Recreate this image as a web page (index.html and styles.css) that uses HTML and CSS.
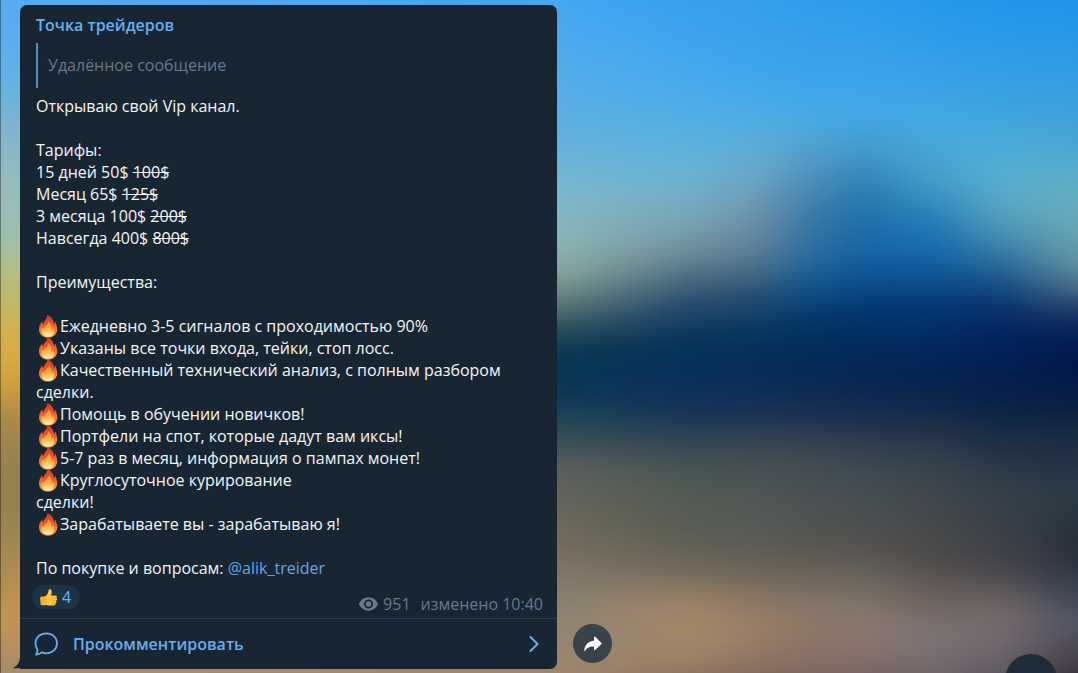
FILE: index.html
```html
<!DOCTYPE html>
<html lang="ru">
<head>
<meta charset="utf-8">
<meta name="viewport" content="width=device-width, initial-scale=1">
<title>Точка трейдеров</title>
<link rel="stylesheet" href="styles.css">
</head>
<body>
<svg class="sprite" aria-hidden="true">
  <defs>
    <linearGradient id="flame-outer" x1="0" y1="0" x2="0" y2="1">
      <stop offset="0" stop-color="#c43a20"/>
      <stop offset=".4" stop-color="#e8532c"/>
      <stop offset=".75" stop-color="#ff8636"/>
      <stop offset="1" stop-color="#ffa848"/>
    </linearGradient>
    <linearGradient id="flame-inner" x1="0" y1="0" x2="0" y2="1">
      <stop offset="0" stop-color="#ff8a36"/>
      <stop offset=".55" stop-color="#ffb84c"/>
      <stop offset="1" stop-color="#fff2b8"/>
    </linearGradient>
    <symbol id="flame" viewBox="0 0 24 24">
      <path fill="url(#flame-outer)" d="M11.200 1C11.600 4.500 8.200 6.500 7.400 10 6.600 9.300 6.200 8.500 6.300 7.300 4.200 9.500 3 12.200 3 15.200c0 5 3.800 8.300 9 8.300s9.300-3.400 9.300-8.300c0-2.900-1.300-4.700-1.500-7.500-1 .7-1.500 1.500-1.700 2.800C17.800 6.500 15.900 2.600 11.200 1z"/>
      <path fill="url(#flame-inner)" d="M12.400 7.600c.3 2.900-3.900 4.300-4.300 7.700-.7-.4-1-1-1.200-1.800-1.200 1.500-1.500 2.900-1.100 4.500.7 3 3.200 4.800 6.100 4.800 3.400 0 6.300-2.500 6.300-5.900 0-1.400-.5-2.300-1-3.300-.3.900-.7 1.400-1.400 1.800.3-3.200-.8-6.100-3.400-7.800z"/>
    </symbol>
  </defs>
</svg>

<div class="wallpaper" aria-hidden="true">
  <div class="tone tone-1"></div>
  <div class="tone tone-2"></div>
  <div class="tone tone-3"></div>
  <div class="tone tone-4"></div>
  <div class="tone tone-5"></div>
  <div class="tone tone-6"></div>
  <div class="tone tone-7"></div>
  <div class="tone tone-8"></div>
  <div class="tone tone-9"></div>
  <div class="haze"></div>
</div>

<main class="chat">
  <article class="message">
    <div class="content">
      <h1 class="author">Точка трейдеров</h1>
      <blockquote class="reply">Удалённое сообщение</blockquote>
      <div class="text">
        <p>Открываю свой Vip канал.</p>
        <p>Тарифы:<br>15 дней 50$ <s>100$</s><br>Месяц 65$ <s>125$</s><br>3 месяца 100$ <s>200$</s><br>Навсегда 400$ <s>800$</s></p>
        <p>Преимущества:</p>
        <p><svg class="emoji"><use href="#flame"/></svg>Ежедневно 3-5 сигналов с проходимостью 90%<br><svg class="emoji"><use href="#flame"/></svg>Указаны все точки входа, тейки, стоп лосс.<br><svg class="emoji"><use href="#flame"/></svg>Качественный технический анализ, с полным разбором сделки.<br><svg class="emoji"><use href="#flame"/></svg>Помощь в обучении новичков!<br><svg class="emoji"><use href="#flame"/></svg>Портфели на спот, которые дадут вам иксы!<br><svg class="emoji"><use href="#flame"/></svg>5-7 раз в месяц, информация о пампах монет!<br><svg class="emoji"><use href="#flame"/></svg>Круглосуточное курирование<br>сделки!<br><svg class="emoji"><use href="#flame"/></svg>Зарабатываете вы - зарабатываю я!</p>
        <p>По покупке и вопросам: <a href="#">@alik_treider</a></p>
      </div>
      <div class="info">
        <button class="reaction" type="button">
          <svg class="thumb" viewBox="0 0 20 20" aria-hidden="true">
            <path fill="#ffc83d" d="M6.800 8.500C9 7.200 9.900 5 10.100 2.400 10.200 1 12.700.7 13.200 2.800c.4 1.700 0 3.400-.6 5h4.600c1.800 0 2.100 2 1 2.700 1.100.7 1 2.400-.2 2.900.8.800.5 2.200-.6 2.600.4 1.100-.2 2.200-1.600 2.300-3.200.3-6.300.2-9-.8z"/>
            <path fill="#f7b233" d="M2.200 9.300l4.900-.6c.7 0 1 .4 1 1v7.400c0 .7-.4 1-1 1H3c-.8 0-1.200-.4-1.300-1.100L1.200 10.500c0-.7.300-1.100 1-1.200z"/>
            <path fill="none" stroke="#e39a26" stroke-width=".7" d="M13.500 10.600h4.500M13.300 13.400h4.600M13 16h4.300"/>
          </svg>
          <span>4</span>
        </button>
        <div class="meta">
          <svg class="eye" viewBox="0 0 20 14" aria-hidden="true">
            <path fill="currentColor" fill-rule="evenodd" d="M10 0C5.400 0 1.700 2.900 0 7c1.700 4.100 5.400 7 10 7s8.300-2.900 10-7C18.300 2.900 14.600 0 10 0zm0 11.800a4.800 4.800 0 1 1 0-9.600 4.800 4.800 0 0 1 0 9.600zM10 4.100a2.900 2.900 0 1 0 0 5.800 2.900 2.900 0 0 0 0-5.800z"/>
          </svg>
          <span>951</span>
          <span class="time">изменено 10:40</span>
        </div>
      </div>
    </div>
    <button class="comment" type="button">
      <svg class="bubble" viewBox="0 0 24 24" aria-hidden="true">
        <path fill="none" stroke="currentColor" stroke-width="1.800" stroke-linejoin="round" d="M12.300 1.300C18.400 1.300 23 5.600 23 11.300s-4.600 10-10.700 10c-1.700 0-3.200-.3-4.600-.9-1.600 1.400-3.500 2.200-5.700 2.300 1.100-1.500 1.600-3.100 1.500-5C2.200 15.800 1.500 13.700 1.500 11.300 1.500 5.600 6.200 1.300 12.300 1.300z"/>
      </svg>
      <span>Прокомментировать</span>
      <svg class="chevron" viewBox="0 0 10 16" aria-hidden="true">
        <path fill="none" stroke="currentColor" stroke-width="2" stroke-linecap="round" stroke-linejoin="round" d="M1.500 1l7 7-7 7"/>
      </svg>
    </button>
    <svg class="tail" viewBox="0 0 8 12" aria-hidden="true">
      <path fill="currentColor" d="M8 0C7.500 5 5 9.500.3 11.300 0 11.500 0 12 .5 12H8z"/>
    </svg>
  </article>
  <button class="share" type="button" aria-label="Поделиться">
    <svg viewBox="0 0 18 16" aria-hidden="true">
      <path fill="currentColor" d="M10 1.200c0-.7.700-1 1.200-.5l6.300 6.200c.4.400.4.800 0 1.200l-6.300 6c-.5.500-1.200.2-1.200-.5v-3C6 10.400 3.300 11.500.9 14.900c-.3.300-.8.200-.7-.3C.8 8.800 4.400 5.200 10 4.700z"/>
    </svg>
  </button>
</main>
<button class="scroll-down" type="button" aria-label="Вниз"></button>
</body>
</html>
```

FILE: styles.css
```css
* {
  box-sizing: border-box;
}

body {
  position: relative;
  min-height: 100vh;
  margin: 0;
  overflow: hidden;
  color: #f5f5f5;
  font: 16px/22px "Open Sans", "Noto Sans", sans-serif;
}

button {
  margin: 0;
  padding: 0;
  border: 0;
  font: inherit;
  cursor: pointer;
}

.sprite {
  position: absolute;
  width: 0;
  height: 0;
}

/* Wallpaper: vertical colour columns cross-faded from left to right */
.wallpaper {
  position: absolute;
  inset: 0;
}

.tone,
.haze {
  position: absolute;
  inset: 0;
}

.haze {
  border-left: 1px solid rgba(0, 0, 0, 0.35);
  backdrop-filter: blur(14px);
}

.tone-1 {
  background: linear-gradient(#55aaf2 0%, #5aaeee 6%, #64b3e0 13%, #80b4cc 19%, #93bbc0 26%, #9dbfae 35%, #b6bd7e 41%, #ccb252 48%, #d8ae44 52%, #cfa23c 57%, #b08c48 61%, #978350 67%, #93834f 76%, #a88b52 84%, #c2954f 91%, #b49060 96%, #a38c6c 100%);
}

.tone-2 {
  background: linear-gradient(#42a6f2 0%, #55aee8 13%, #5eb0e0 19%, #7cb9cb 29%, #8eb5b5 36%, #8aa9a0 40%, #76908a 43%, #44646a 47%, #174050 50%, #053455 54%, #0d3a56 59%, #2c4a55 64%, #5a5f5c 69%, #69675a 77%, #7b7060 83%, #8a8274 89%, #97856f 96%, #a3886a 100%);
  mask-image: linear-gradient(to right, transparent 4%, #000 50%);
}

.tone-3 {
  background: linear-gradient(#3aa0ee 0%, #48aaea 13%, #55b0e2 19%, #68b4d6 26%, #76adc0 30%, #789ca8 35%, #66808c 39%, #3a5a74 43%, #1f466a 46%, #08355a 50%, #04305a 54%, #10305a 59%, #243b55 64%, #3f4f55 67%, #505852 72%, #5b5d54 80%, #74695a 85%, #9a8266 89%, #a68a6a 92%, #a3886c 97%, #86705e 100%);
  mask-image: linear-gradient(to right, transparent 52%, #000 64%);
}

.tone-4 {
  background: linear-gradient(#369fec 0%, #42a8ea 13%, #50aee0 19%, #66acd0 24%, #7099b2 30%, #68899c 35%, #54788f 39%, #2c5276 43%, #174468 46%, #04305a 51%, #062d58 55%, #142f56 60%, #2a3c52 64%, #404c54 67%, #4f5654 72%, #585a56 80%, #6c6459 85%, #8c7864 89%, #9c8268 94%, #957a66 97%, #7c685c 100%);
  mask-image: linear-gradient(to right, transparent 64%, #000 70%);
}

.tone-5 {
  background: linear-gradient(#309cea 0%, #40a6ea 13%, #48aae2 18%, #569fca 23%, #4e8eb8 27%, #3c79a6 32%, #30709f 37%, #165a92 42%, #0a427a 45%, #04305e 49%, #032a54 55%, #152c50 60%, #293850 64%, #424c54 68%, #4d5254 74%, #57564f 82%, #70685e 86%, #8a7a6a 91%, #8c7668 95%, #7c6860 100%);
  mask-image: linear-gradient(to right, transparent 70%, #000 75%);
}

.tone-6 {
  background: linear-gradient(#2e9bea 0%, #3fa6ea 13%, #44a8e2 18%, #4298cc 23%, #3384b8 26%, #2478ae 30%, #1b6ca8 34%, #1460a0 39%, #0a4e8c 42%, #033a74 45%, #032c5e 51%, #042654 55%, #12294e 60%, #2b3a4c 65%, #414c52 70%, #4b5052 76%, #55534f 82%, #6e665f 86%, #88786c 91%, #8a7972 95%, #786564 100%);
  mask-image: linear-gradient(to right, transparent 75%, #000 80%);
}

.tone-7 {
  background: linear-gradient(#2697ea 0%, #359fe8 9%, #42a8e4 16%, #4aa8d8 22%, #4a9ecc 27%, #3286bc 31%, #1b70b0 36%, #1262a0 39%, #0c4c8a 42%, #053878 45%, #032861 51%, #032252 55%, #0e2648 60%, #273648 65%, #3c464e 71%, #44474a 77%, #4c4a4a 83%, #5a5452 86%, #766a66 91%, #7e7678 95%, #706468 100%);
  mask-image: linear-gradient(to right, transparent 80%, #000 87%);
}

.tone-8 {
  background: linear-gradient(#2395ea 0%, #319de6 9%, #3ea5e0 16%, #4cabd8 22%, #5aaecb 28%, #549fbc 33%, #3a7fa8 37%, #1f5c90 41%, #0a3570 45%, #032460 49%, #021c4e 55%, #0c2245 61%, #243244 67%, #343f48 73%, #3b4048 79%, #44434a 84%, #565152 87%, #746868 90%, #766e72 95%, #5a545e 100%);
  mask-image: linear-gradient(to right, transparent 87%, #000 93%);
}

.tone-9 {
  background: linear-gradient(#2094ea 0%, #2f9ae4 9%, #3ea2dc 16%, #4aa6d2 22%, #62aec2 28%, #6aa6b0 34%, #6496a2 39%, #4c6c86 43%, #223a66 46%, #041c56 50%, #01164a 54%, #081c42 59%, #1c2c42 65%, #2c3c46 73%, #28303c 79%, #2a303c 83%, #3a4454 88%, #505468 92%, #4a4650 97%, #38303a 100%);
  mask-image: linear-gradient(to right, transparent 93%, #000 100%);
}

.chat {
  position: relative;
  display: flex;
  align-items: flex-end;
  gap: 16px;
  padding: 5px 20px 4px;
}

/* Message card */
.message {
  position: relative;
  flex: 0 1 537px;
  min-width: 0;
  border-radius: 7px 7px 7px 0;
  background: #182533;
}

.content {
  padding: 9px 14px 3px 16px;
}

.author {
  margin: 0;
  color: #68aeec;
  font-size: 16px;
  font-weight: 600;
}

.reply {
  display: flex;
  align-items: center;
  height: 45px;
  margin: 7px 0;
  padding: 0 0 2px 10px;
  border-left: 2px solid #4a93c9;
  color: #687988;
}

.text p {
  margin: 0 0 22px;
}

.text p:last-child {
  margin-bottom: 0;
}

.text a {
  color: #62a8e4;
  text-decoration: none;
}

.emoji {
  width: 24px;
  height: 24px;
  margin: -4px 0;
  vertical-align: -2px;
}

.info {
  display: flex;
  justify-content: space-between;
  align-items: flex-start;
  margin: 6px 0 0 -4px;
}

.reaction {
  display: flex;
  align-items: center;
  gap: 4px;
  height: 24px;
  padding: 0 9px 0 7px;
  border-radius: 12px;
  background: #1d3347;
  color: #6ab3f3;
}

.thumb {
  width: 19px;
  height: 19px;
}

.meta {
  display: flex;
  align-items: center;
  gap: 5px;
  padding-top: 8px;
  color: #687988;
}

.eye {
  width: 19px;
  height: 14px;
}

.time {
  margin-left: 5px;
}

.comment {
  display: flex;
  align-items: center;
  width: 100%;
  height: 51px;
  padding: 0 18px 0 14px;
  border-top: 1px solid #2c3e4e;
  background: none;
  color: #68aeec;
  font-weight: 600;
}

.bubble {
  width: 24px;
  height: 24px;
  margin-right: 15px;
}

.chevron {
  width: 10px;
  height: 16px;
  margin-left: auto;
}

.tail {
  position: absolute;
  right: 100%;
  bottom: 0;
  width: 7px;
  height: 12px;
  color: #182533;
}

.share {
  display: grid;
  flex: none;
  place-items: center;
  width: 39px;
  height: 39px;
  margin-bottom: 6px;
  border-radius: 50%;
  background: #39444a;
  color: #fff;
}

.share svg {
  width: 18px;
  height: 16px;
}

.scroll-down {
  position: absolute;
  right: 21px;
  bottom: -33px;
  width: 52px;
  height: 52px;
  border-radius: 50%;
  background: #1f2c3a;
}
```
